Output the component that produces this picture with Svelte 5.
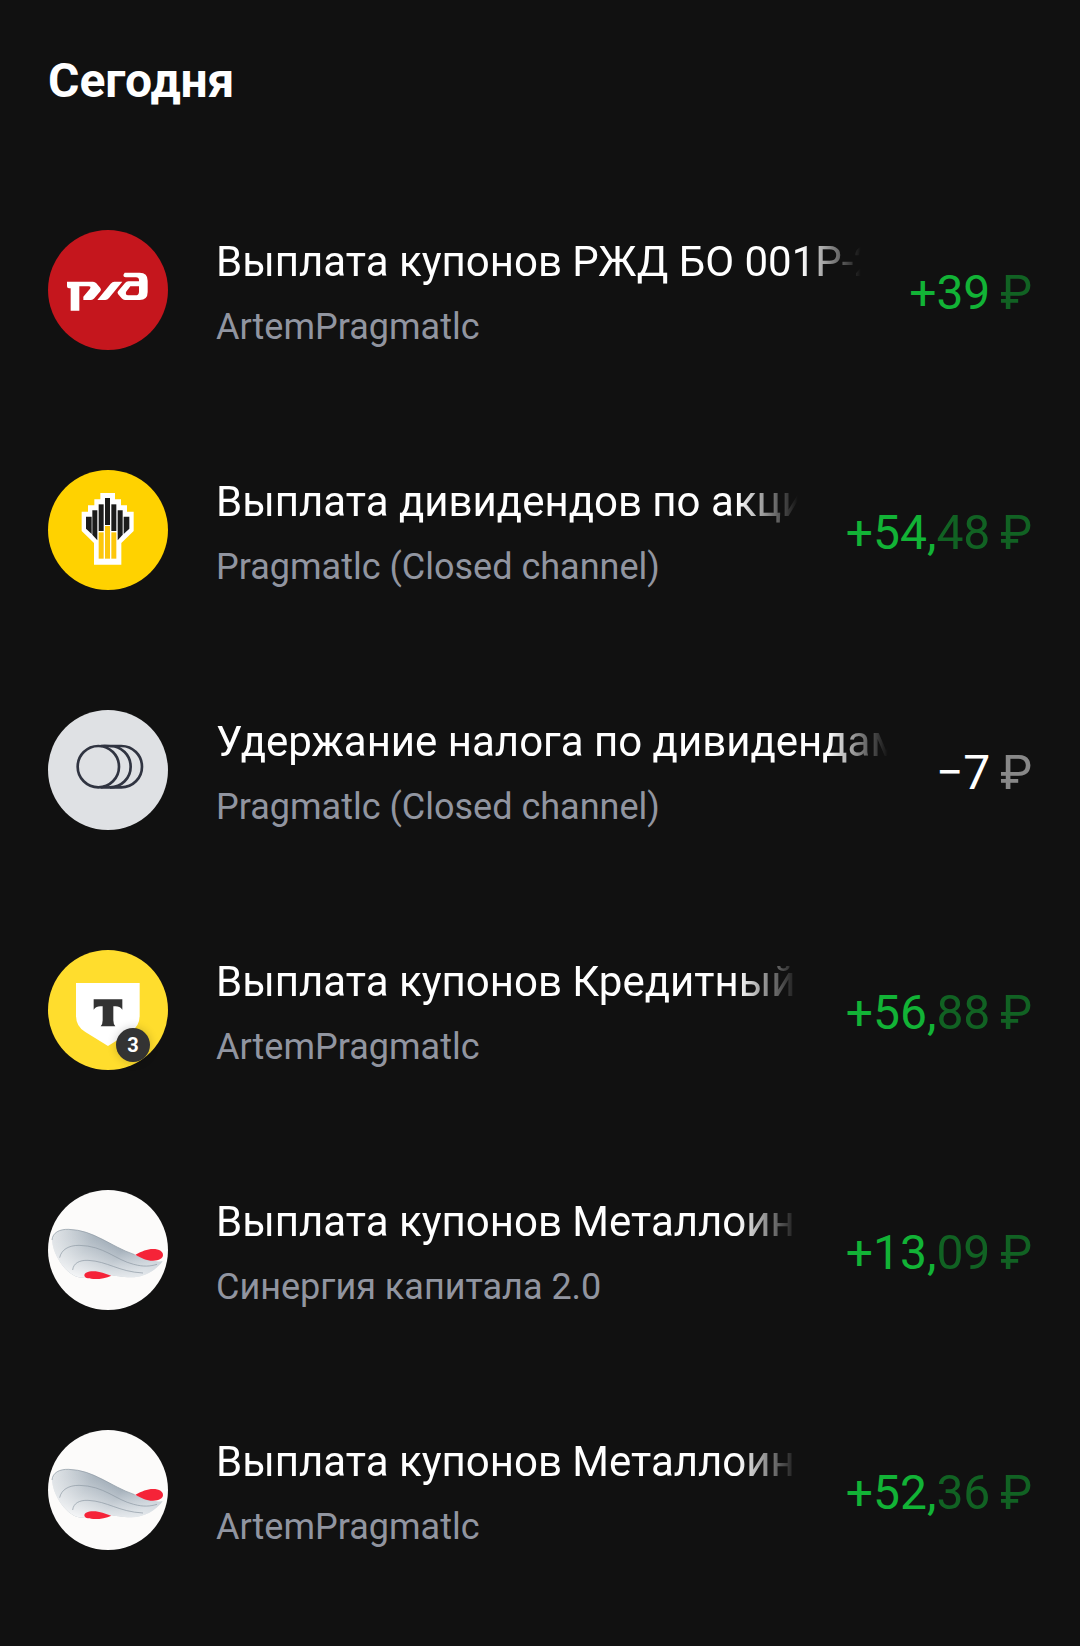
<script>
    const operations = [
        { icon: "rzd", title: "Выплата купонов РЖД БО 001P-2", account: "ArtemPragmatlc", main: "+39", rest: "" },
        { icon: "rosneft", title: "Выплата дивидендов по акци", account: "Pragmatlc (Closed channel)", main: "+54,", rest: "48" },
        { icon: "tax", title: "Удержание налога по дивидендам", account: "Pragmatlc (Closed channel)", main: "−7", rest: "" },
        { icon: "tbank", title: "Выплата купонов Кредитный", account: "ArtemPragmatlc", main: "+56,", rest: "88", badge: 3 },
        { icon: "metal", title: "Выплата купонов Металлоин", account: "Синергия капитала 2.0", main: "+13,", rest: "09" },
        { icon: "metal", title: "Выплата купонов Металлоин", account: "ArtemPragmatlc", main: "+52,", rest: "36" },
    ];
</script>

<main>
    <h1>Сегодня</h1>
    <ul>
        {#each operations as op}
            <li>
                <div class="icon">
                    <svg viewBox="0 0 360 360" aria-hidden="true">
                        {#if op.icon === "rzd"}
                            <circle cx="180" cy="180" r="180" fill="#c5161d" />
                            <g fill="#fff">
                                <path d="M57 155h78q6 0 10 5l12 14q4 5 0 10l-18 21q-4 5-10 5h-23v-10l20-24q4-7-4-7H94v73H68v-67h-5q-6 0-6-6z" />
                                <path d="M148 210l40-49q5-6 11-6h24l-40 49q-5 6-11 6z" />
                                <path fill-rule="evenodd" d="M230 128h45q24 0 24 24v34q0 24-24 24h-44q-6 0-10-5l-11-13q-3-4 0-8l21-25q4-5 10-5h32v-3q0-9-9-9h-31q-7 0-7-7zM247 169l-13 17q-2 10 6 10h22q11 0 11-11v-16z" />
                            </g>
                        {:else if op.icon === "rosneft"}
                            <circle cx="180" cy="180" r="180" fill="#ffd200" />
                            <path fill="#fff" d="M157 69h44v19h18v18h18v19h20v58l-37 36v65h-82v-65l-37-36v-58h19v-19h19v-18h18z" />
                            <g fill="#1c1c1b">
                                <path d="M114 140h17v52l-17-16z" />
                                <path d="M133 121h15v90l-15-17z" />
                                <path d="M152 103h15v80h-15z" />
                                <path d="M171 84h15v81h-15z" />
                                <path d="M190 103h15v80h-15z" />
                                <path d="M209 121h15v73l-15 17z" />
                                <path d="M227 140h17v36l-17 16z" />
                            </g>
                            <g fill="#fdc70c">
                                <path d="M152 187h15v79h-15z" />
                                <path d="M171 168h15v98h-15z" />
                                <path d="M190 187h15v79h-15z" />
                            </g>
                        {:else if op.icon === "tax"}
                            <circle cx="180" cy="180" r="180" fill="#dfe1e4" />
                            <g fill="none" stroke="#303441" stroke-width="8">
                                <circle cx="151" cy="170" r="62" />
                                <path d="M158 108q10-1 28 0a62 62 0 0 1 0 124q-18 1-28 0" />
                                <path d="M186 108h34a62 62 0 0 1 0 124h-34" />
                            </g>
                        {:else if op.icon === "tbank"}
                            <circle cx="180" cy="180" r="180" fill="#ffdd2d" />
                            <path fill="#fff" d="M84 99h191v98q0 33-28 49l-67 42-68-42q-28-16-28-49z" />
                            <path fill="#333" d="M137 148h86v31q-8-10-20-10h-7v42q0 12 6 18h-44q6-6 6-18v-42h-7q-12 0-20 10z" />
                        {:else}
                            <defs>
                                <linearGradient id="wing" x1="0" y1="0" x2="1" y2="0.35">
                                    <stop offset="0" stop-color="#dfe3e6" />
                                    <stop offset="0.4" stop-color="#a9b4be" />
                                    <stop offset="0.7" stop-color="#99a6b2" />
                                    <stop offset="1" stop-color="#c4cdd5" />
                                </linearGradient>
                                <linearGradient id="shine" x1="0" y1="1" x2="0.6" y2="0">
                                    <stop offset="0.1" stop-color="#fff" stop-opacity="0.9" />
                                    <stop offset="0.8" stop-color="#fff" stop-opacity="0" />
                                </linearGradient>
                            </defs>
                            <circle cx="180" cy="180" r="180" fill="#fcfbfa" />
                            <path fill="url(#wing)" d="M12 150c2-22 22-33 50-32 76 2 125 51 198 76 35 14 65 22 84 20-20 27-55 48-94 48-30 0-45-6-74-8-40-2-60 12-84 8C48 250 14 190 12 150z" />
                            <path fill="url(#shine)" d="M12 150c2-22 22-33 50-32 76 2 125 51 198 76 35 14 65 22 84 20-20 27-55 48-94 48-30 0-45-6-74-8-40-2-60 12-84 8C48 250 14 190 12 150z" />
                            <g fill="none" stroke="#8b97a2" stroke-width="2">
                                <path d="M12 150c2-22 22-33 50-32 76 2 125 51 198 76" />
                                <path d="M35 203c5-24 27-37 58-37 75 1 110 44 164 57 30 8 50 6 70 0" />
                                <path d="M74 240c2-20 20-30 46-29 60 3 90 34 165 38" />
                            </g>
                            <path fill="#f52338" d="M262 194c20-10 35-17 53-17 20 0 30 8 30 18s-12 17-30 17c-20 0-36-8-53-18z" />
                            <path fill="#f52338" d="M190 257c-16 7-36 11-54 10-18 0-27-4-27-11s9-12 27-12c20 0 36 8 54 13z" />
                        {/if}
                    </svg>
                    {#if op.badge}
                        <span class="badge">{op.badge}</span>
                    {/if}
                </div>
                <div class="info">
                    <p class="title">{op.title}</p>
                    <p class="account">{op.account}</p>
                </div>
                <div class="amount" class:income={op.main.startsWith("+")}>
                    {op.main}<span class="rest">{op.rest}&thinsp;₽</span>
                </div>
            </li>
        {/each}
    </ul>
</main>

<style>
    :global(body) {
        background: #111111;
    }

    main {
        font-family: Roboto, "Liberation Sans", sans-serif;
        color: #ffffff;
        padding: 51px 48px 0;
    }

    h1 {
        margin: 0 0 59px;
        font-size: 48px;
        line-height: 60px;
        font-weight: 700;
    }

    ul {
        list-style: none;
        margin: 0;
        padding: 0;
    }

    li {
        display: flex;
        align-items: flex-start;
        gap: 48px;
        padding: 60px 0 50px;
    }

    .icon {
        position: relative;
        flex: none;
        width: 120px;
        height: 120px;
    }

    .icon svg {
        display: block;
        width: 100%;
        height: 100%;
    }

    .badge {
        position: absolute;
        right: 18px;
        bottom: 8px;
        width: 34px;
        height: 34px;
        border-radius: 50%;
        background: #333333;
        box-shadow: 0 0 10px rgba(0, 0, 0, 0.2);
        font-size: 20px;
        line-height: 34px;
        font-weight: 700;
        text-align: center;
    }

    .info {
        flex: 1;
        min-width: 0;
    }

    .title,
    .account {
        margin: 0;
        white-space: nowrap;
        overflow: hidden;
    }

    .title {
        font-size: 42px;
        line-height: 64px;
        mask-image: linear-gradient(to left, transparent, #000 60px);
    }

    .account {
        font-size: 36px;
        line-height: 66px;
        color: #9195a0;
    }

    .amount {
        font-size: 48px;
        line-height: 126px;
        white-space: nowrap;
    }

    .rest {
        opacity: 0.5;
    }

    .income {
        color: #12b336;
    }
</style>
